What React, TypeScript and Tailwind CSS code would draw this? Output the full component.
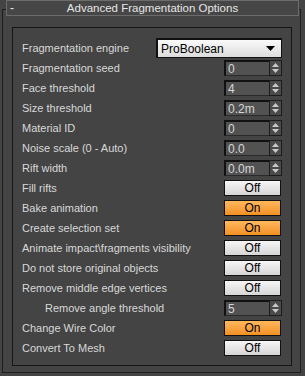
import { ReactNode } from "react";

type Row =
  | { label: string; kind: "spin"; value: string; indent?: boolean }
  | { label: string; kind: "toggle"; on: boolean };

const rows: Row[] = [
  { label: "Fragmentation seed", kind: "spin", value: "0" },
  { label: "Face threshold", kind: "spin", value: "4" },
  { label: "Size threshold", kind: "spin", value: "0.2m" },
  { label: "Material ID", kind: "spin", value: "0" },
  { label: "Noise scale (0 - Auto)", kind: "spin", value: "0.0" },
  { label: "Rift width", kind: "spin", value: "0.0m" },
  { label: "Fill rifts", kind: "toggle", on: false },
  { label: "Bake animation", kind: "toggle", on: true },
  { label: "Create selection set", kind: "toggle", on: true },
  { label: "Animate impact\\fragments visibility", kind: "toggle", on: false },
  { label: "Do not store original objects", kind: "toggle", on: false },
  { label: "Remove middle edge vertices", kind: "toggle", on: false },
  { label: "Remove angle threshold", kind: "spin", value: "5", indent: true },
  { label: "Change Wire Color", kind: "toggle", on: true },
  { label: "Convert To Mesh", kind: "toggle", on: false },
];

function Spinner({ value }: { value: string }) {
  return (
    <div className="flex h-[16px] w-[58px]">
      <div className="flex-1 h-full bg-[#525252] border-t-2 border-l-2 border-b border-[#111] border-b-[#2a2a2a] pl-[2px] text-[12px] leading-[12px] text-[#d6d6d6] flex items-center">
        {value}
      </div>
      <div className="w-[13px] h-full bg-[#4a4a4a] border border-[#1c1c1c] flex flex-col items-center justify-center gap-[2px]">
        <svg width="7" height="4" viewBox="0 0 7 4">
          <polygon points="3.5,0 7,4 0,4" fill="#c8c8c8" />
        </svg>
        <svg width="7" height="4" viewBox="0 0 7 4">
          <polygon points="0,0 7,0 3.5,4" fill="#c8c8c8" />
        </svg>
      </div>
    </div>
  );
}

function Toggle({ on }: { on: boolean }) {
  return (
    <div
      className={`w-[57px] h-[16px] mr-[1px] border border-[#111] flex items-center justify-center text-[12px] text-black ${
        on
          ? "bg-gradient-to-b from-[#ffb85c] to-[#f2901f]"
          : "bg-gradient-to-b from-[#f6f6f6] to-[#d6d6d6]"
      }`}
    >
      {on ? "On" : "Off"}
    </div>
  );
}

function Line({ label, indent, children }: { label: string; indent?: boolean; children: ReactNode }) {
  return (
    <div className="h-[20px] flex items-center justify-between">
      <span className={`text-[11px] text-[#d8d8d8] ${indent ? "pl-[23px]" : ""}`}>{label}</span>
      {children}
    </div>
  );
}

export default function App() {
  return (
    <div
      className="w-[305px] h-[376px] bg-[#444444] pt-[9px] pl-[2px]"
      style={{ fontFamily: '"Liberation Sans", Arial, sans-serif' }}
    >
      <div className="w-[299px] h-[364px] border border-[#1e1e1e]">
        {/* rollout title */}
        <div className="-mt-[10px] ml-[3px] w-[293px] h-[16px] border border-[#6c6c6c] bg-[#464646] relative flex items-center justify-center">
          <span className="absolute left-[3px] top-[1px] text-[12px] leading-[12px] text-[#e6e6e6]">-</span>
          <span className="text-[11.5px] leading-[12px] text-[#e6e6e6]">Advanced Fragmentation Options</span>
        </div>

        <div className="mt-[11px] ml-[9px] w-[280px] h-[339px] border border-[#151515] pt-[10px] pl-[9px] pr-[9px]">
          <Line label="Fragmentation engine">
            <div className="w-[126px] h-[20px] border-2 border-[#111] border-b border-r bg-gradient-to-b from-[#fafafa] to-[#dcdcdc] flex items-center justify-between pl-[3px] pr-[6px] text-[12px] text-black">
              ProBoolean
              <svg width="9" height="5" viewBox="0 0 9 5">
                <polygon points="0,0 9,0 4.5,5" fill="#000" />
              </svg>
            </div>
          </Line>
          {rows.map((r) => (
            <Line key={r.label} label={r.label} indent={r.kind === "spin" && r.indent}>
              {r.kind === "spin" ? <Spinner value={r.value} /> : <Toggle on={r.on} />}
            </Line>
          ))}
        </div>
      </div>
    </div>
  );
}
